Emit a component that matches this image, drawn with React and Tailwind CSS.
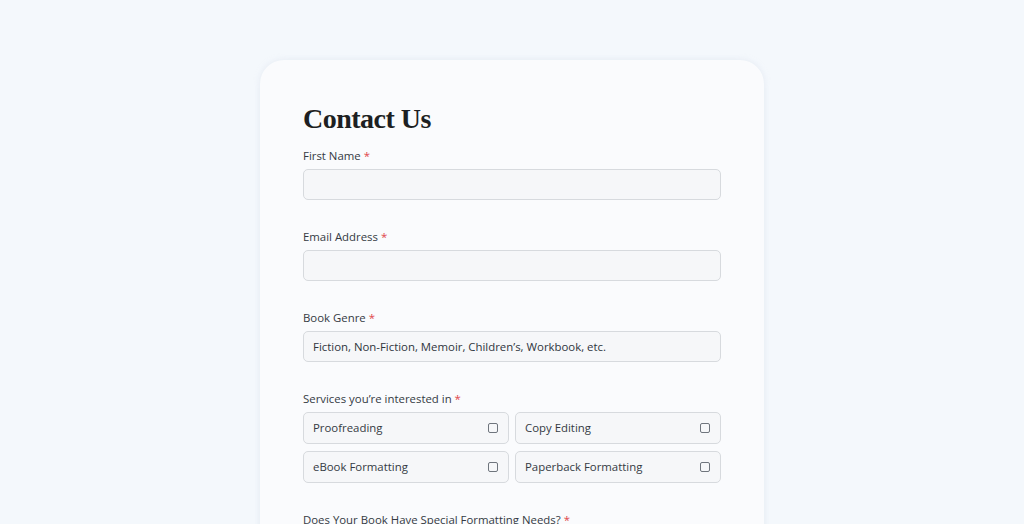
import React from 'react';

const Label = ({ children }) => (
    <label className="block text-[11.4px] leading-[18px] text-[#343a43] mb-[4px]">
        {children} <span className="text-[#e0474c]">*</span>
    </label>
);

const TextInput = ({ placeholder }) => (
    <input
        type="text"
        placeholder={placeholder}
        className="w-full h-[31px] rounded-[5px] border border-[#d7dade] bg-[#f6f7f9] px-[9px] text-[11.4px] text-[#2f353d] placeholder:text-[#2f353d] outline-none"
    />
);

const Option = ({ label }) => (
    <div className="flex items-center justify-between h-[32px] rounded-[5px] border border-[#d7dade] bg-[#f6f7f9] pl-[9px] pr-[10px]">
        <span className="text-[11.4px] text-[#343a43]">{label}</span>
        <span className="w-[10px] h-[10px] rounded-[2px] border border-[#6f757d]" />
    </div>
);

const App = () => {
    const services = ['Proofreading', 'Copy Editing', 'eBook Formatting', 'Paperback Formatting'];

    return (
        <div className="h-[524px] bg-[#f4f8fc] pt-[60px] font-['Open_Sans','Noto_Sans',sans-serif] overflow-hidden">
            <div className="mx-auto w-[504px] rounded-[24px] bg-[#fafbfd] shadow-[0_0_6px_rgba(200,210,225,0.35)] px-[43px] pt-[40px] pb-[60px]">
                <h1 className="font-['Liberation_Serif',serif] font-bold text-[28px] leading-[38px] tracking-[-0.5px] text-[#1d1f22] mb-[9px]">
                    Contact Us
                </h1>

                <div className="flex flex-col gap-[28px]">
                    <div>
                        <Label>First Name</Label>
                        <TextInput />
                    </div>
                    <div>
                        <Label>Email Address</Label>
                        <TextInput />
                    </div>
                    <div>
                        <Label>Book Genre</Label>
                        <TextInput placeholder="Fiction, Non-Fiction, Memoir, Children’s, Workbook, etc." />
                    </div>
                    <div>
                        <Label>Services you’re interested in</Label>
                        <div className="grid grid-cols-2 gap-x-[6px] gap-y-[7px]">
                            {services.map((s) => (
                                <Option key={s} label={s} />
                            ))}
                        </div>
                    </div>
                    <div>
                        <Label>Does Your Book Have Special Formatting Needs?</Label>
                        <TextInput />
                    </div>
                </div>
            </div>
        </div>
    );
};

export default App;
